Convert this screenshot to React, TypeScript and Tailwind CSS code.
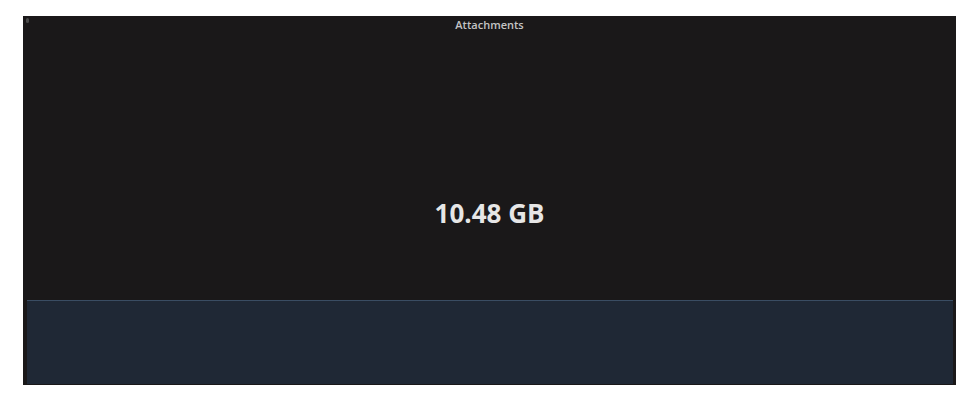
import React from 'react';

const App = () => {
  return (
    <div className="w-[976px] h-[402px] bg-white pt-[16px] pl-[23px]" style={{ fontFamily: '"Open Sans", "Noto Sans", sans-serif' }}>
      <div className="w-[933px] h-[369px] bg-[#1a1819] flex flex-col">
        <div className="relative h-[16px] pt-[2px] text-center text-[11px] leading-[13px] font-semibold text-[#c4c4c4]">
          <span className="absolute left-[3px] top-[2px] w-[3px] h-[5px] rounded-sm bg-[#4a4a4a]" />
          Attachments
        </div>
        <div className="flex-1 flex flex-col items-center pt-[165px]">
          <div className="text-[26px] leading-[32px] font-bold text-[#e6e6e6]">10.48 GB</div>
        </div>
        <div className="h-[84px] ml-[4px] mr-[3px] mb-[1px] bg-[#1f2835] border-t border-[#3a4d63]" />
      </div>
    </div>
  );
};

export default App;
